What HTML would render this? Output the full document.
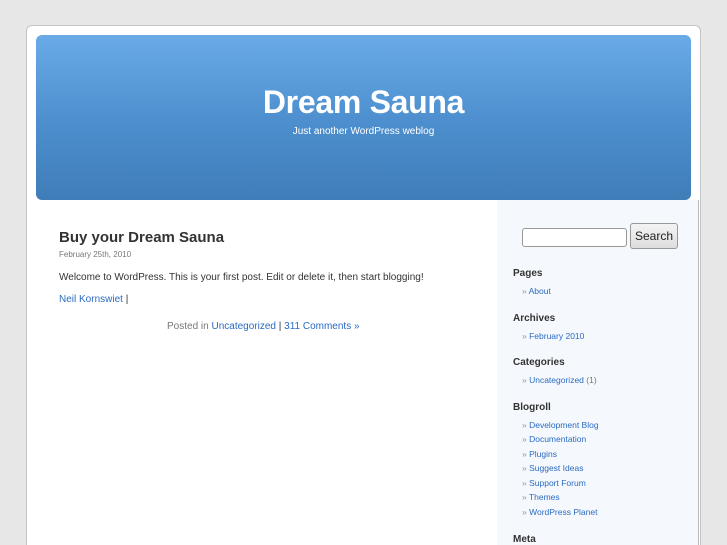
<!DOCTYPE html>
<html style="width:727px;height:545px;overflow:hidden"><head><meta charset="utf-8"><style>
*{margin:0;padding:0;box-sizing:border-box}
body{width:727px;height:545px;overflow:hidden;background:#e7e7e7;font-family:"Liberation Sans",sans-serif;position:relative}
#page{position:absolute;left:26px;top:25px;width:675px;height:530px;background:#fff;border:1px solid #c4c4c4;border-radius:6px}
#header{position:absolute;left:36px;top:35px;width:655px;height:165px;border-radius:6px;background:linear-gradient(#69aae7,#4c8ecd 55%,#3f7db8)}
#header h1{position:absolute;top:49px;width:100%;text-align:center;color:#fff;font-size:32px;font-weight:bold;letter-spacing:-0.3px}
#header .d{position:absolute;top:91px;width:100%;text-align:center;color:#fff;font-size:10px}
#side{position:absolute;left:497px;top:200px;width:202px;height:345px;background:#f5f8fc;border-right:1px solid #bbb}
a{color:#2a6bc4;text-decoration:none}
.t{position:absolute;left:59px;top:229px;font-size:15px;font-weight:bold;color:#333}
.date{position:absolute;left:59px;top:250px;font-size:8px;color:#777}
.p{position:absolute;left:59px;font-size:10px;color:#333}
#inp{position:absolute;left:522px;top:228px;width:105px;height:19px;border:1px solid #999;border-radius:3px;background:#fff}
#btn{position:absolute;left:630px;top:223px;width:48px;height:26px;border:1px solid #999;border-radius:3px;background:linear-gradient(#f4f4f4,#ddd);font-size:12px;color:#222;text-align:center;line-height:24px}
.h{position:absolute;left:513px;font-size:10px;font-weight:bold;color:#333}
.l{position:absolute;left:522px;font-size:8.5px;color:#999}
.l a{color:#2a6bc4}
</style></head><body>
<div id="page"></div>
<div id="header"><h1>Dream Sauna</h1><div class="d">Just another WordPress weblog</div></div>
<div id="side"></div>
<div class="t">Buy your Dream Sauna</div>
<div class="date">February 25th, 2010</div>
<div class="p" style="top:272px">Welcome to WordPress. This is your first post. Edit or delete it, then start blogging!</div>
<div class="p" style="top:294px"><a>Neil Kornswiet</a> |</div>
<div class="p" style="top:321px;left:167px;color:#777">Posted in <a>Uncategorized</a> <span style="color:#333">|</span> <a>311 Comments »</a></div>
<div id="inp"></div><div id="btn">Search</div>
<div class="h" style="top:268px">Pages</div>
<div class="l" style="top:286px">» <a>About</a></div>
<div class="h" style="top:313px">Archives</div>
<div class="l" style="top:331px">» <a>February 2010</a></div>
<div class="h" style="top:357px">Categories</div>
<div class="l" style="top:375px">» <a>Uncategorized</a> <span style="color:#777">(1)</span></div>
<div class="h" style="top:402px">Blogroll</div>
<div class="l" style="top:420px">» <a>Development Blog</a></div>
<div class="l" style="top:434px">» <a>Documentation</a></div>
<div class="l" style="top:449px">» <a>Plugins</a></div>
<div class="l" style="top:463px">» <a>Suggest Ideas</a></div>
<div class="l" style="top:478px">» <a>Support Forum</a></div>
<div class="l" style="top:492px">» <a>Themes</a></div>
<div class="l" style="top:507px">» <a>WordPress Planet</a></div>
<div class="h" style="top:534px">Meta</div>
</body></html>
